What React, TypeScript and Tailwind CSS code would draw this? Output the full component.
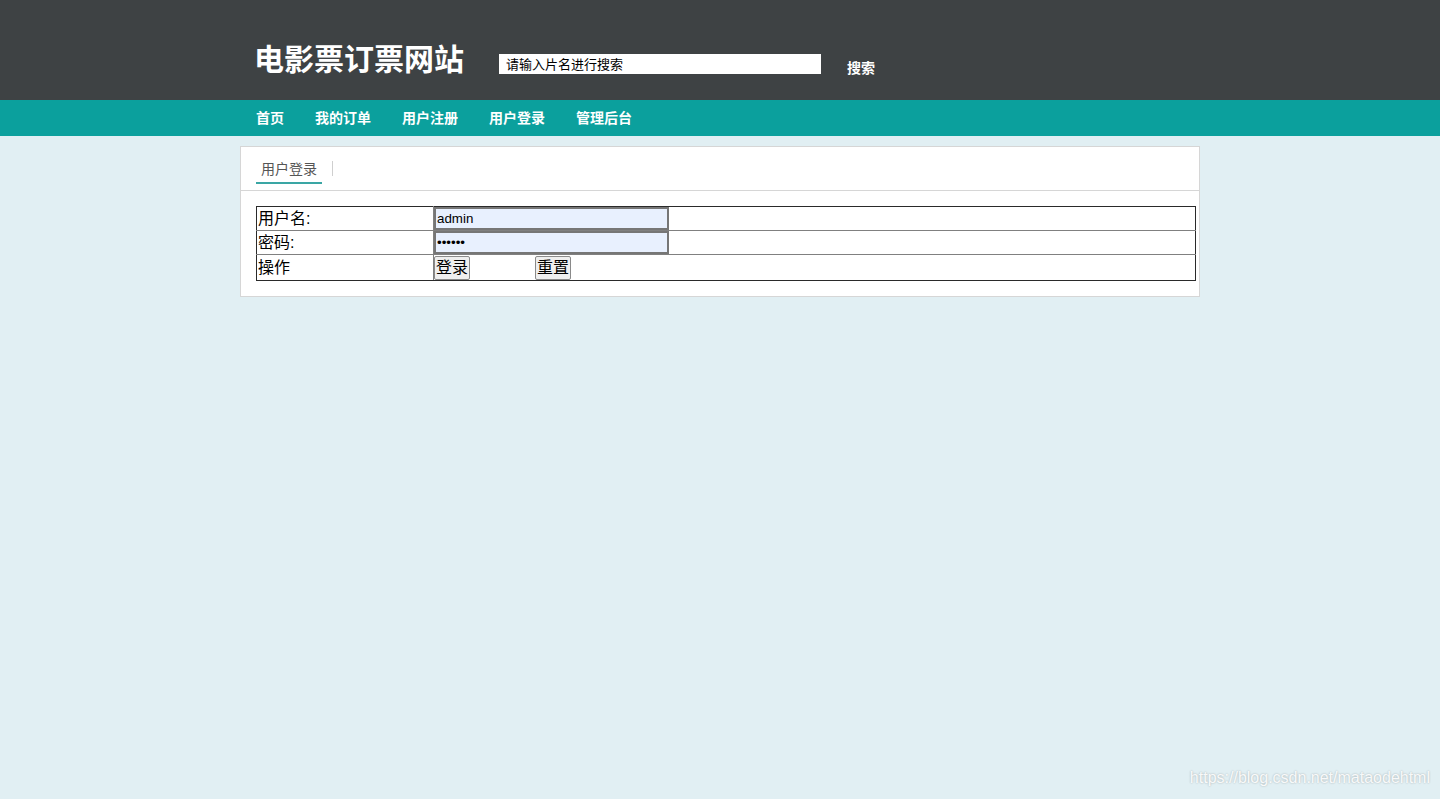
import React from "react";

const font = { fontFamily: '"Liberation Sans", "Noto Sans CJK SC", sans-serif' };

export default function App() {
  const navItems = ["首页", "我的订单", "用户注册", "用户登录", "管理后台"];
  return (
    <div className="relative min-h-[799px] bg-[#e1eff3]" style={font}>
      <header className="h-[100px] bg-[#3e4244]">
        <div className="mx-auto flex w-[960px] items-start pl-[14px] pr-4 pt-[45px]">
          <h1 className="text-[30px] font-bold leading-[30px] text-white">电影票订票网站</h1>
          <input
            className="ml-[35px] mt-[9px] h-[20px] w-[322px] bg-white pl-[7px] text-[13px] text-black outline-none placeholder:text-black"
            placeholder="请输入片名进行搜索"
          />
          <span className="ml-[26px] mt-[15px] text-[14px] font-bold leading-[16px] text-white">搜索</span>
        </div>
      </header>
      <nav className="h-[36px] bg-[#0ba09d]">
        <div className="mx-auto flex h-full w-[960px] items-center gap-[31px] px-4">
          {navItems.map((n) => (
            <span key={n} className="text-[14px] font-bold text-white">
              {n}
            </span>
          ))}
        </div>
      </nav>
      <div className="mx-auto mt-[10px] w-[960px] border border-[#d6d6d6] bg-white">
        <div className="flex h-[44px] items-start border-b border-[#d6d6d6] pl-[15px]">
          <div className="mt-[13px] flex h-[24px] flex-col items-start">
            <span className="px-[5px] text-[14px] leading-[18px] text-[#555]">用户登录</span>
            <div className="mt-[4px] h-[2px] w-[66px] bg-[#3aa6a4]" />
          </div>
          <div className="ml-[10px] mt-[14px] h-[15px] w-px bg-[#cfcfcf]" />
        </div>
        <div className="pb-[15px] pl-[15px] pt-[15px]">
          <table className="w-[940px] border-collapse text-[16px] text-black">
            <tbody>
              <tr className="h-[24px]">
                <td className="w-[177px] border border-[#808080] border-l-[#2a2a2a] border-t-[#2a2a2a] p-0 pl-px align-middle leading-[20px]">
                  用户名:
                </td>
                <td className="border border-[#808080] border-r-[#2a2a2a] border-t-[#2a2a2a] p-0 align-middle">
                  <input
                    defaultValue="admin"
                    className="block h-[23px] w-[235px] border-2 border-[#767676] bg-[#e8f0fe] px-px text-[13.33px] text-black outline-none"
                  />
                </td>
              </tr>
              <tr className="h-[24px]">
                <td className="border border-[#808080] border-l-[#2a2a2a] p-0 pl-px align-middle leading-[20px]">密码:</td>
                <td className="border border-[#808080] border-r-[#2a2a2a] p-0 align-middle">
                  <input
                    type="password"
                    defaultValue="123456"
                    className="block h-[23px] w-[235px] border-2 border-[#767676] bg-[#e8f0fe] px-px text-[13.33px] text-black outline-none"
                  />
                </td>
              </tr>
              <tr className="h-[26px]">
                <td className="border border-[#808080] border-b-[#2a2a2a] border-l-[#2a2a2a] p-0 pl-px align-middle leading-[20px]">
                  操作
                </td>
                <td className="border border-[#808080] border-b-[#2a2a2a] border-r-[#2a2a2a] p-0 align-middle">
                  <div className="flex items-center">
                    <button className="h-[24px] rounded-[2px] border border-[#8a8a8a] bg-[#efefef] px-px text-[16px] leading-[20px] text-black">
                      登录
                    </button>
                    <button className="ml-[65px] h-[24px] rounded-[2px] border border-[#8a8a8a] bg-[#efefef] px-px text-[16px] leading-[20px] text-black">
                      重置
                    </button>
                  </div>
                </td>
              </tr>
            </tbody>
          </table>
        </div>
      </div>
      <div className="absolute bottom-[9px] right-[10px] text-[16px] text-white/90 [text-shadow:0_0_2px_rgba(0,0,0,0.3)]">
        https://blog.csdn.net/mataodehtml
      </div>
    </div>
  );
}
